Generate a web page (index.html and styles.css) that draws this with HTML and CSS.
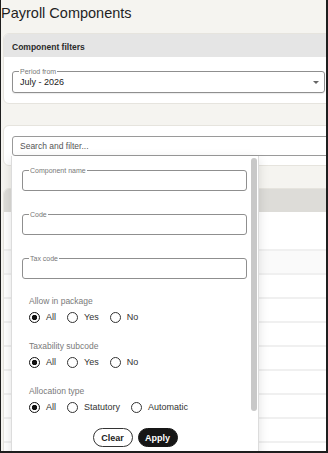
FILE: index.html
```html
<!DOCTYPE html>
<html lang="en">
<head>
    <meta charset="UTF-8">
    <meta name="viewport" content="width=device-width, initial-scale=1.0">
    <title>Payroll Components</title>
    <link rel="stylesheet" href="styles.css">
</head>
<body>
    <div class="frame">
        <div class="page">
            <h1>Payroll Components</h1>

            <section class="card filters">
                <div class="card-head">Component filters</div>
                <div class="card-body">
                    <div class="select">
                        <span class="float">Period from</span>
                        July - 2026
                        <span class="caret"></span>
                    </div>
                </div>
            </section>

            <section class="card search-card">
                <div class="search-wrap">
                    <input class="search" type="text" placeholder="Search and filter...">

                    <div class="popover">
                        <div class="fields">
                            <div class="field">
                                <span class="float">Component name</span>
                                <input type="text">
                            </div>
                            <div class="field">
                                <span class="float">Code</span>
                                <input type="text">
                            </div>
                            <div class="field">
                                <span class="float">Tax code</span>
                                <input type="text">
                            </div>
                        </div>

                        <div class="group">
                            <div class="group-label">Allow in package</div>
                            <div class="opts">
                                <label class="opt"><input type="radio" name="package" checked>All</label>
                                <label class="opt"><input type="radio" name="package">Yes</label>
                                <label class="opt"><input type="radio" name="package">No</label>
                            </div>
                        </div>

                        <div class="group">
                            <div class="group-label">Taxability subcode</div>
                            <div class="opts">
                                <label class="opt"><input type="radio" name="subcode" checked>All</label>
                                <label class="opt"><input type="radio" name="subcode">Yes</label>
                                <label class="opt"><input type="radio" name="subcode">No</label>
                            </div>
                        </div>

                        <div class="group">
                            <div class="group-label">Allocation type</div>
                            <div class="opts">
                                <label class="opt"><input type="radio" name="allocation" checked>All</label>
                                <label class="opt"><input type="radio" name="allocation">Statutory</label>
                                <label class="opt"><input type="radio" name="allocation">Automatic</label>
                            </div>
                        </div>

                        <div class="actions">
                            <button class="btn btn-clear">Clear</button>
                            <button class="btn btn-apply">Apply</button>
                        </div>

                        <div class="thumb"></div>
                    </div>
                </div>
            </section>

            <section class="card table">
                <div class="table-head"></div>
                <div class="table-filter"></div>
                <div class="row row-alt"></div>
                <div class="row"></div>
                <div class="row"></div>
                <div class="row"></div>
                <div class="row"></div>
                <div class="row"></div>
                <div class="row"></div>
                <div class="row"></div>
                <div class="row"></div>
            </section>
        </div>
    </div>
</body>
</html>
```

FILE: styles.css
```css
body {
    margin: 0;
    font-family: "Liberation Sans", Arial, sans-serif;
    background: #fff;
}

.frame {
    position: relative;
    width: 328px;
    height: 453px;
    box-sizing: border-box;
    border-left: 1px solid #1e1e1e;
    border-right: 2px solid #1e1e1e;
    border-bottom: 2px solid #1e1e1e;
    background: #f5f4f0;
    overflow: hidden;
}

.page {
    width: 360px;
}

h1 {
    margin: 0;
    padding-top: 4px;
    font-size: 14.5px;
    line-height: 18px;
    font-weight: normal;
    color: #1f1f1f;
}

.card {
    margin-left: 2px;
    background: #fff;
    border: 1px solid #e6e4de;
    border-radius: 6px;
    box-sizing: border-box;
}

.filters {
    margin-top: 11px;
    width: 334px;
}

.card-head {
    height: 20px;
    padding: 3px 8px 0;
    line-height: 20px;
    font-size: 8.5px;
    font-weight: bold;
    color: #2a2a2a;
    background: #e5e5e5;
    border-radius: 5px 5px 0 0;
}

.card-body {
    padding: 14px 8px 10px;
}

.select {
    position: relative;
    width: 313px;
    height: 22px;
    box-sizing: border-box;
    padding: 1px 7px 0;
    border: 1px solid #8f8f8f;
    border-radius: 3px;
    line-height: 19px;
    font-size: 9px;
    color: #222;
    box-shadow: 0 1px 1px rgba(0, 0, 0, 0.08);
}

.float {
    position: absolute;
    top: -5px;
    left: 6px;
    padding: 0 1px;
    background: #fff;
    font-size: 7px;
    line-height: 9px;
    color: #777;
}

.caret {
    position: absolute;
    right: 5px;
    top: 9px;
    border-left: 3px solid transparent;
    border-right: 3px solid transparent;
    border-top: 3px solid #666;
}

.search-card {
    margin-top: 21px;
    width: 360px;
    padding: 10px 8px 9px;
}

.search-wrap {
    position: relative;
}

.search {
    display: block;
    width: 340px;
    height: 20px;
    box-sizing: border-box;
    margin: 0;
    padding: 0 7px;
    border: 1px solid #9a9a9a;
    border-radius: 3px;
    font-family: inherit;
    font-size: 8.5px;
    color: #333;
    outline: none;
}

.search::placeholder {
    color: #555;
}

.popover {
    position: absolute;
    top: 100%;
    left: -1px;
    z-index: 5;
    width: 248px;
    height: 310px;
    box-sizing: border-box;
    padding: 14px 10px 0;
    background: #fff;
    border: 1px solid #dcdcdc;
    border-top: 0;
    box-shadow: 0 3px 10px rgba(0, 0, 0, 0.12);
}

.fields {
    display: flex;
    flex-direction: column;
    gap: 23px;
}

.field {
    position: relative;
    width: 225px;
    height: 21px;
    box-sizing: border-box;
    border: 1px solid #8f8f8f;
    border-radius: 3px;
}

.field input {
    display: block;
    width: 100%;
    height: 100%;
    box-sizing: border-box;
    margin: 0;
    padding: 0 7px;
    border: 0;
    background: transparent;
    outline: none;
}

.group {
    margin-top: 17px;
    padding-left: 7px;
}

.fields + .group {
    margin-top: 16px;
}

.group-label {
    font-size: 8.5px;
    line-height: 12px;
    color: #7a7a7a;
}

.opts {
    display: flex;
    align-items: center;
    gap: 11px;
    height: 12px;
    margin-top: 4px;
}

.opt {
    display: flex;
    align-items: center;
    gap: 6px;
    font-size: 9px;
    color: #333;
}

.opt input {
    appearance: none;
    width: 11px;
    height: 11px;
    box-sizing: border-box;
    margin: 0;
    border: 1.5px solid #333;
    border-radius: 50%;
    background: #fff;
}

.opt input:checked {
    border-color: #111;
    background: radial-gradient(circle, #111 2.4px, #fff 3px);
}

.actions {
    display: flex;
    justify-content: center;
    gap: 5px;
    margin-top: 15px;
}

.btn {
    width: 40px;
    height: 19px;
    padding: 0;
    border: 1px solid #333;
    border-radius: 10px;
    font-family: inherit;
    font-size: 9px;
    font-weight: bold;
    background: #fff;
    color: #222;
}

.btn-apply {
    background: #161616;
    border-color: #161616;
    color: #fff;
}

.thumb {
    position: absolute;
    top: 2px;
    right: 1px;
    width: 6px;
    height: 253px;
    border-radius: 3px;
    background: #c8c8c8;
}

.table {
    margin-top: 22px;
    width: 360px;
    border-radius: 6px 6px 0 0;
}

.table-head {
    height: 23px;
    background: #dddcd8;
    border-radius: 5px 5px 0 0;
}

.table-filter {
    height: 37px;
}

.row {
    height: 22px;
    border-top: 2px solid #f0f0f0;
}

.row-alt {
    background: #fafafa;
}
```
